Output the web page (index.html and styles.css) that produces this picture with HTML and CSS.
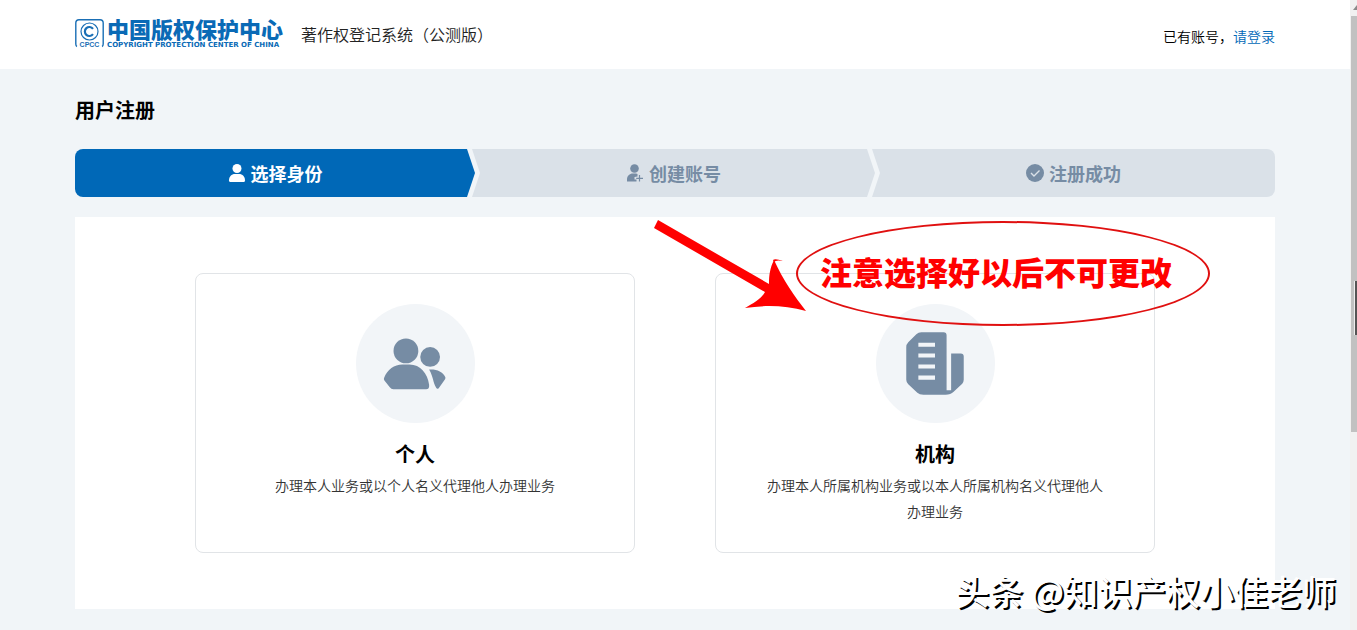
FILE: index.html
```html
<!DOCTYPE html>
<html lang="zh-CN">
<head>
    <meta charset="UTF-8">
    <meta name="viewport" content="width=device-width, initial-scale=1.0">
    <title>用户注册</title>
    <link rel="stylesheet" href="styles.css">
</head>
<body>

    <div class="page">
        <header class="header">
            <div class="container header-inner">
                <div class="logo">
                    <svg class="logo-mark" width="29" height="29" viewBox="0 0 29 29" fill="none" stroke="#1a6fb5">
                        <path d="M2 27.5Q.8 27 .8 25V4Q.8.8 4 .8H25Q28.2.8 28.2 4V25Q28.2 27 27 27.5" stroke-width="1.4"/>
                        <circle cx="14.500" cy="12.500" r="8.500" stroke-width="1.200"/>
                        <path d="M18 9.800A4.500 4.500 0 1 0 18 15.200" stroke-width="2.200"/>
                        <text x="14.500" y="28" text-anchor="middle" class="logo-abbr">CPCC</text>
                    </svg>
                    <div class="logo-text">
                        <span class="logo-cn">中国版权保护中心</span>
                        <span class="logo-en">COPYRIGHT PROTECTION CENTER OF CHINA</span>
                    </div>
                </div>
                <span class="system-name">著作权登记系统（公测版）</span>
                <p class="login-tip">已有账号，<a href="#">请登录</a></p>
            </div>
        </header>

        <main class="container">
            <h1 class="title">用户注册</h1>

            <!-- Steps -->
            <ol class="steps">
                <li class="step active">
                    <svg width="18" height="18" viewBox="0 0 18 18" fill="currentColor">
                        <circle cx="9" cy="4.500" r="4.500"/>
                        <path d="M1 16.500C1 12.500 3.500 10 7 10H11C14.500 10 17 12.500 17 16.500Q17 18 15.500 18H2.500Q1 18 1 16.500Z"/>
                    </svg>
                    选择身份
                </li>
                <li class="step">
                    <svg width="18" height="18" viewBox="0 0 18 18" fill="currentColor">
                        <circle cx="8.500" cy="4.500" r="4.300"/>
                        <path d="M1 17.500V15.500C1 12 3.500 9.500 7 9.500H10L11.500 10V12.500L8.500 13V15.500H10.500V17.500H1Z"/>
                        <path d="M13.500 11V17.500M10.200 14.300H17" stroke="currentColor" stroke-width="1.200"/>
                    </svg>
                    创建账号
                </li>
                <li class="step">
                    <svg width="18" height="18" viewBox="0 0 18 18">
                        <circle cx="9" cy="9" r="9" fill="currentColor"/>
                        <path d="M5 9L8 12L13.500 6.500" fill="none" stroke="#dae1e8" stroke-width="1.400"/>
                    </svg>
                    注册成功
                </li>
            </ol>

            <!-- Identity options -->
            <section class="panel">
                <button type="button" class="card">
                    <span class="card-icon">
                        <svg width="119" height="119" viewBox="0 0 118 118" fill="#768ca4">
                            <circle cx="49.500" cy="46.500" r="12.300"/>
                            <circle cx="73.500" cy="52.500" r="9.800"/>
                            <path d="M28 73C31 65 38 60 46 60H53C64 60 71 69 72.500 80Q73 84.500 69.500 84.500H37Q35 84.500 33.500 82.500L28 75.500Q27.300 74.500 28 73Z"/>
                            <path d="M72.500 65C80 64.500 86 67 88.500 72.500Q89 73.500 88.300 74.500L82 83.500Q80.500 85 79.500 83C76 77 77 73 72.500 65Z"/>
                        </svg>
                    </span>
                    <span class="card-name">个人</span>
                    <span class="card-desc">办理本人业务或以个人名义代理他人办理业务</span>
                </button>
                <button type="button" class="card">
                    <span class="card-icon">
                        <svg width="119" height="119" viewBox="0 0 118 118" fill="#768ca4">
                            <path d="M45 28H67Q70 28 70 31V85.500H74.500V49H84Q87 49 87 52V75Q87 77 85.500 79L77 87Q74 90 69 90H47Q43 90 41 88L32 79.500Q30 77.500 30 75V43Q30 40 32 38L40 30Q42 28 45 28Z"/>
                            <path d="M42 38.500H58.500V42.500H42ZM42 49H58.500V53H42ZM42 60H58.500V64H42ZM42 71H58.500V75H42Z" fill="#f2f5f8"/>
                        </svg>
                    </span>
                    <span class="card-name">机构</span>
                    <span class="card-desc">办理本人所属机构业务或以本人所属机构名义代理他人办理业务</span>
                </button>

                <!-- Note over the cards -->
                <svg class="note-arrow" width="160" height="100" viewBox="0 0 160 100" fill="#f00">
                    <path d="M8 3L119 67C119 58 120 51 124 43C133 63 145 80 156 94C135 88 114 88 95 91C104 86 111 82 115 75L4 11Z"/>
                    <path d="M123 43Q125 41 133 44Q126 42.500 124 45Z"/>
                </svg>
                <p class="note">注意选择好以后不可更改</p>
            </section>
        </main>
    </div>

    <div class="scrollbar"><div class="scrollbar-thumb"></div></div>
    <p class="watermark">头条 @知识产权小佳老师</p>

</body>
</html>
```

FILE: styles.css
```css
* {
    box-sizing: border-box;
}
body {
    display: flex;
    position: relative;
    min-height: 100vh;
    margin: 0;
    font-family: "Noto Sans CJK SC", sans-serif;
    color: #000;
    background-color: #f1f5f8;
}
p, h1, ol {
    margin: 0;
    padding: 0;
}
.page {
    flex: 1;
    padding-bottom: 21px;
}
.container {
    max-width: 1200px;
    margin: 0 auto;
}

/* Header */
.header {
    padding: 19px 0 20px;
    background-color: #fff;
}
.header-inner {
    display: flex;
    align-items: center;
    height: 30px;
}
.logo {
    display: flex;
    gap: 3px;
    color: #0a6ab6;
}
.logo-abbr {
    font: bold 7px "Liberation Sans", sans-serif;
    fill: #1a6fb5;
    stroke: none;
}
.logo-text {
    display: flex;
    flex-direction: column;
    width: 176px;
}
.logo-cn {
    font-size: 22px;
    font-weight: 900;
    line-height: 18px;
    white-space: nowrap;
}
.logo-en {
    padding-top: 5px;
    font: bold 7px/7px "DejaVu Sans", sans-serif;
    white-space: nowrap;
}
.system-name {
    margin-left: 18px;
    font-size: 16px;
    font-weight: 350;
    color: #222;
}
.login-tip {
    margin-left: auto;
    padding-top: 4px;
    font-size: 14px;
    font-weight: 350;
}
.login-tip a {
    color: #0068b7;
    text-decoration: none;
}

/* Steps */
.title {
    padding: 26px 0 24px;
    font-size: 20px;
    font-weight: bold;
    line-height: 30px;
}
.steps {
    display: grid;
    grid-template-columns: repeat(3, 1fr);
    list-style: none;
}
.step {
    display: flex;
    justify-content: center;
    align-items: center;
    gap: 5px;
    height: 48px;
    margin-left: -3px;
    font-size: 18px;
    font-weight: bold;
    color: #768ca4;
    background-color: #dae1e8;
    clip-path: polygon(0 0, calc(100% - 8px) 0, 100% 50%, calc(100% - 8px) 100%, 0 100%, 8px 50%);
}
.step.active {
    margin-left: 0;
    color: #fff;
    background-color: #0068b7;
    border-radius: 8px 0 0 8px;
    clip-path: polygon(0 0, calc(100% - 8px) 0, 100% 50%, calc(100% - 8px) 100%, 0 100%);
}
.step:last-child {
    border-radius: 0 8px 8px 0;
    clip-path: polygon(0 0, 100% 0, 100% 100%, 0 100%, 8px 50%);
}

/* Cards */
.panel {
    display: flex;
    position: relative;
    justify-content: center;
    gap: 80px;
    margin-top: 20px;
    padding: 56px 120px;
    background-color: #fff;
}
.card {
    display: flex;
    flex: 1;
    flex-direction: column;
    align-items: center;
    min-height: 280px;
    padding: 30px 48px 24px;
    font-family: inherit;
    color: #000;
    background-color: #fff;
    border: 1px solid #e1e4e7;
    border-radius: 8px;
    cursor: pointer;
}
.card:hover {
    border-color: #0068b7;
}
.card-icon {
    display: flex;
    background-color: #f2f5f8;
    border-radius: 50%;
}
.card-name {
    margin-top: 16px;
    font-size: 20px;
    font-weight: bold;
    line-height: 30px;
}
.card-desc {
    margin-top: 3px;
    font-size: 14px;
    font-weight: 350;
    line-height: 26px;
    color: #333;
}

/* Note */
.note-arrow {
    position: absolute;
    top: 0;
    left: 575px;
}
.note {
    display: flex;
    position: absolute;
    top: 4px;
    left: 721px;
    justify-content: center;
    align-items: center;
    width: 414px;
    height: 105px;
    padding: 0 14px 6px 0;
    font-size: 32px;
    font-weight: 900;
    color: #f00;
    border: 2px solid #e01010;
    border-radius: 50%;
}

/* Scrollbar */
.scrollbar {
    width: 7px;
    padding: 16px 0 0 1px;
    background-color: #f1f1f1;
}
.scrollbar::before {
    content: "";
    position: absolute;
    top: 5px;
    right: 0;
    border-left: 4px solid transparent;
    border-bottom: 5px solid #8a8a8a;
}
.scrollbar-thumb {
    position: relative;
    height: 416px;
    background-color: #c1c1c1;
}
.scrollbar-thumb::after {
    content: "";
    position: absolute;
    top: 265px;
    right: 0;
    width: 2px;
    height: 54px;
    background-color: #555;
    border-left: 1px solid #eee;
}

.watermark {
    position: absolute;
    right: 21px;
    bottom: 14px;
    font-size: 34px;
    font-weight: 500;
    line-height: 50px;
    color: #fff;
    text-shadow: 2px 2px 0 #000;
}
```
